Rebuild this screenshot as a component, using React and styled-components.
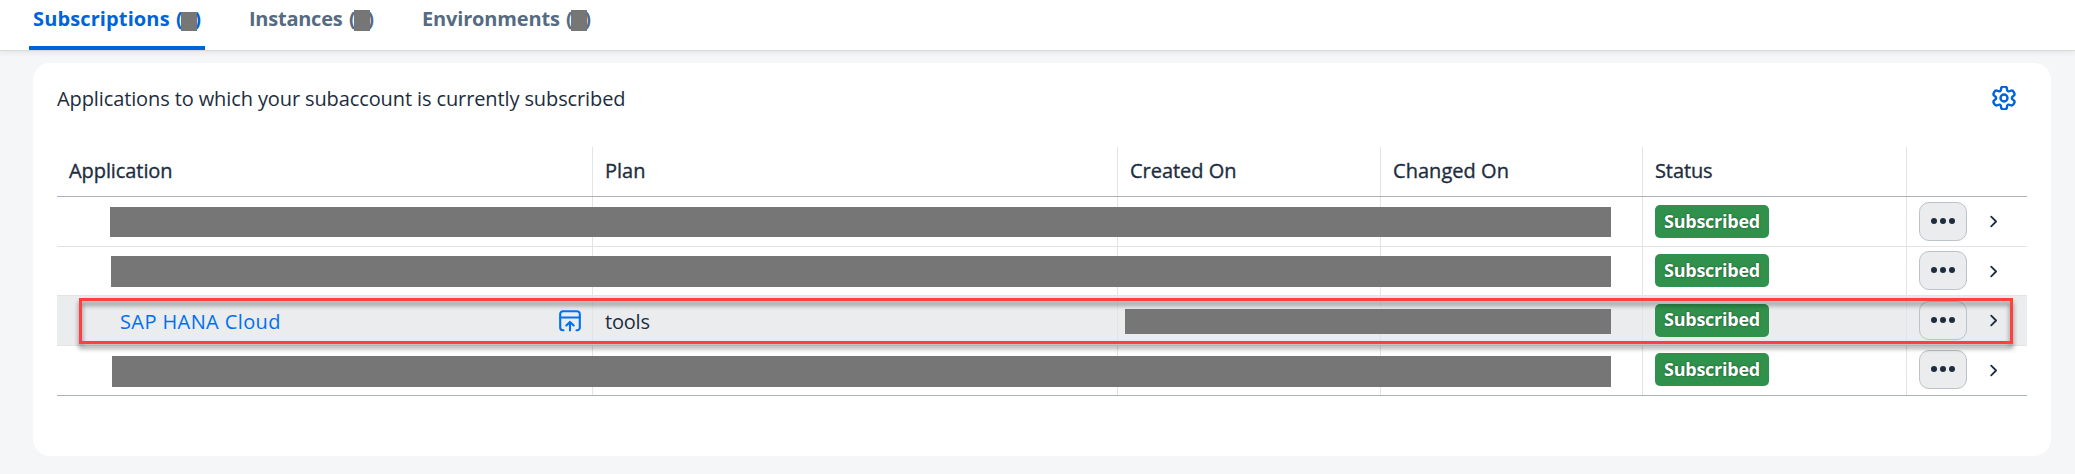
import React from "react";
import styled, { createGlobalStyle } from "styled-components";

const GlobalStyle = createGlobalStyle`
  *, *::before, *::after { box-sizing: border-box; }
  body { margin: 0; background: #f5f6f8; }
`;

const Page = styled.div`
  height: 474px;
  overflow: hidden;
  display: flex;
  flex-direction: column;
  background: #f5f6f8;
  color: #1d2d3e;
  font-family: "Open Sans", "Noto Sans", sans-serif;
  font-size: 20px;
  line-height: 24px;
`;

const TabBar = styled.nav`
  flex: none;
  height: 51px;
  display: flex;
  gap: 40px;
  padding-left: 29px;
  background: #fff;
  border-bottom: 1px solid #d9d9d9;
  box-shadow: 0 2px 5px rgba(34, 53, 72, 0.08);
`;

const Tab = styled.div`
  width: ${(p) => p.$width}px;
  height: 50px;
  display: flex;
  justify-content: space-between;
  padding: 7px 4px 0;
  font-weight: 700;
  white-space: nowrap;
  color: ${(p) => (p.$active ? "#0064d9" : "#556b82")};
  border-bottom: 4px solid ${(p) => (p.$active ? "#0064d9" : "transparent")};
`;

const TabLabel = styled.span`
  letter-spacing: ${(p) => p.$spacing}px;
`;

const Count = styled.span`
  position: relative;
  width: 25px;
  display: flex;
  justify-content: space-between;
`;

const CountMask = styled.span`
  position: absolute;
  left: 5px;
  top: ${(p) => p.$top}px;
  width: 16px;
  height: ${(p) => 24 - p.$top}px;
  background: #767676;
`;

const Card = styled.section`
  height: 393px;
  margin: 12px 24px 0 33px;
  padding: 0 24px;
  background: #fff;
  border-radius: 17px;
  position: relative;
`;

const Toolbar = styled.header`
  height: 84px;
  display: flex;
  align-items: flex-start;
  justify-content: space-between;
  padding: 24px 11px 0 0;
`;

const Title = styled.span`
  letter-spacing: -0.11px;
`;

const SettingsButton = styled.button`
  display: flex;
  margin-top: -1px;
  padding: 0;
  border: 0;
  background: none;
`;

const Table = styled.div`
  position: relative;
  width: 1970px;
`;

const Row = styled.div`
  position: relative;
  height: ${(p) => p.$height}px;
  display: grid;
  grid-template-columns: 536px 525px 263px 262px 264px 120px;
  background: ${(p) => (p.$hover ? "#eaecee" : "#fff")};
  border-bottom: 1px solid ${(p) => (p.$strong ? "#a8b3bf" : "#e2e4e6")};
`;

const Cell = styled.div`
  display: flex;
  align-items: center;
  padding: 0 0 ${(p) => p.$lift || 0}px 12px;
  border-right: 1px solid #e2e4e6;
  white-space: nowrap;
`;

const ActionCell = styled(Cell)`
  border-right: 0;
`;

const HeaderCell = styled(Cell)`
  padding-bottom: 2px;
  font-weight: 500;
  -webkit-text-stroke: 0.35px #1d2d3e;
  letter-spacing: ${(p) => p.$spacing}px;
`;

const AppCell = styled(Cell)`
  justify-content: space-between;
  padding: 0 11px 0 63px;
`;

const AppLink = styled.a`
  color: #0070f2;
  letter-spacing: 0.4px;
  padding-top: 2px;
`;

const PlanText = styled.span`
  letter-spacing: -0.2px;
  padding-top: 2px;
`;

const Badge = styled.span`
  height: 33px;
  width: 114px;
  padding-bottom: 2px;
  display: flex;
  align-items: center;
  justify-content: center;
  background: #30914c;
  border-radius: 5px;
  color: #fff;
  font-size: 18px;
  font-weight: 700;
  letter-spacing: -0.25px;
  text-shadow: 0 0 2px rgba(0, 0, 0, 0.5);
`;

const MoreButton = styled.button`
  width: 48px;
  height: 39px;
  padding: 0 0 1px;
  display: flex;
  align-items: center;
  justify-content: center;
  gap: 3px;
  background: #eaecee;
  border: 1px solid #bcc3ca;
  border-radius: 10px;
`;

const Dot = styled.span`
  width: 6px;
  height: 6px;
  border-radius: 50%;
  background: #1d2d3e;
`;

const Chevron = styled.svg`
  margin: ${(p) => p.$drop}px 0 0 22px;
`;

const Mask = styled.div`
  position: absolute;
  left: ${(p) => p.$left}px;
  right: 416px;
  top: ${(p) => p.$top}px;
  height: ${(p) => p.$height}px;
  background: #767676;
`;

const Highlight = styled.div`
  position: absolute;
  left: 22px;
  top: 151px;
  width: 1934px;
  height: 46px;
  border: 3px solid #ff4040;
  filter: drop-shadow(0 4px 2.5px rgba(0, 0, 0, 0.5));
  pointer-events: none;
`;

const polar = (radius, degrees) => {
  const a = (degrees * Math.PI) / 180;
  return [12 + radius * Math.cos(a), 12 + radius * Math.sin(a)];
};

const gearPath = () => {
  const points = [30, 90, 150, 210, 270, 330].flatMap((a) => [
    polar(7.9, a - 22),
    polar(11.8, a - 14),
    polar(11.8, a + 14),
    polar(7.9, a + 22),
  ]);
  const mid = (p, q) => [(p[0] + q[0]) / 2, (p[1] + q[1]) / 2];
  const fmt = (p) => p.map((n) => n.toFixed(2)).join(" ");
  const start = mid(points[points.length - 1], points[0]);
  const curves = points.map((p, i) => `Q${fmt(p)} ${fmt(mid(p, points[(i + 1) % points.length]))}`);
  return `M${fmt(start)}${curves.join("")}Z`;
};

const GearIcon = () => (
  <svg width="24" height="24" viewBox="0 0 24 24" fill="none" stroke="#0064d9" strokeWidth="2.4">
    <path d={gearPath()} strokeLinejoin="round" />
    <circle cx="12" cy="12" r="3.5" />
  </svg>
);

const OpenAppIcon = () => (
  <svg width="22" height="22" viewBox="0 0 22 22" fill="none" stroke="#0070f2" strokeWidth="2.1" strokeLinecap="round" strokeLinejoin="round">
    <path d="M4.5 20.3H4A2.8 2.8 0 0 1 1.2 17.5V4A2.8 2.8 0 0 1 4 1.2h14A2.8 2.8 0 0 1 20.8 4v13.5a2.8 2.8 0 0 1-2.8 2.8h-.5" />
    <path d="M1.2 7.5h19.6M11 20.5v-8M7.3 15.5l3.7-3.6 3.7 3.6" />
  </svg>
);

const tabs = [
  { label: "Subscriptions", width: 176, spacing: 0.12, maskTop: 5, active: true },
  { label: "Instances", width: 133, spacing: -0.25, maskTop: 3 },
  { label: "Environments", width: 177, spacing: -0.16, maskTop: 3 },
];

const columns = [
  ["Application", -0.08],
  ["Plan", 0],
  ["Created On", -0.03],
  ["Changed On", 0.04],
  ["Status", -0.1],
];

const rows = [
  { height: 50, lift: 0, mask: { $left: 53, $top: 10, $height: 30 } },
  { height: 49, lift: 1, mask: { $left: 54, $top: 9, $height: 31 } },
  { height: 50, lift: 1, hover: true, app: "SAP HANA Cloud", plan: "tools", mask: { $left: 1068, $top: 13, $height: 25 } },
  { height: 50, lift: 2, last: true, mask: { $left: 55, $top: 10, $height: 31 } },
];

export default function App() {
  return (
    <Page>
      <GlobalStyle />
      <TabBar>
        {tabs.map((t) => (
          <Tab key={t.label} $width={t.width} $active={t.active}>
            <TabLabel $spacing={t.spacing}>{t.label}</TabLabel>
            <Count>
              <span>(</span>
              <span>)</span>
              <CountMask $top={t.maskTop} />
            </Count>
          </Tab>
        ))}
      </TabBar>
      <Card>
        <Toolbar>
          <Title>Applications to which your subaccount is currently subscribed</Title>
          <SettingsButton aria-label="Settings">
            <GearIcon />
          </SettingsButton>
        </Toolbar>
        <Table>
          <Row $height={50} $strong>
            {columns.map(([name, spacing]) => (
              <HeaderCell key={name} $spacing={spacing}>{name}</HeaderCell>
            ))}
            <ActionCell />
          </Row>
          {rows.map((r, i) => (
            <Row key={i} $height={r.height} $hover={r.hover} $strong={r.last}>
              <AppCell>
                {r.app && <AppLink>{r.app}</AppLink>}
                {r.app && <OpenAppIcon />}
              </AppCell>
              <Cell>{r.plan && <PlanText>{r.plan}</PlanText>}</Cell>
              <Cell />
              <Cell />
              <Cell $lift={r.lift}><Badge>Subscribed</Badge></Cell>
              <ActionCell $lift={r.lift}>
                <MoreButton aria-label="More actions">
                  <Dot />
                  <Dot />
                  <Dot />
                </MoreButton>
                <Chevron $drop={r.lift} width="9" height="13" viewBox="0 0 9 13" fill="none" stroke="#1d2d3e" strokeWidth="1.8" strokeLinecap="round" strokeLinejoin="round">
                  <path d="M2.2 1.6l4.9 4.9-4.9 4.9" />
                </Chevron>
              </ActionCell>
              <Mask {...r.mask} />
            </Row>
          ))}
          <Highlight />
        </Table>
      </Card>
    </Page>
  );
}
